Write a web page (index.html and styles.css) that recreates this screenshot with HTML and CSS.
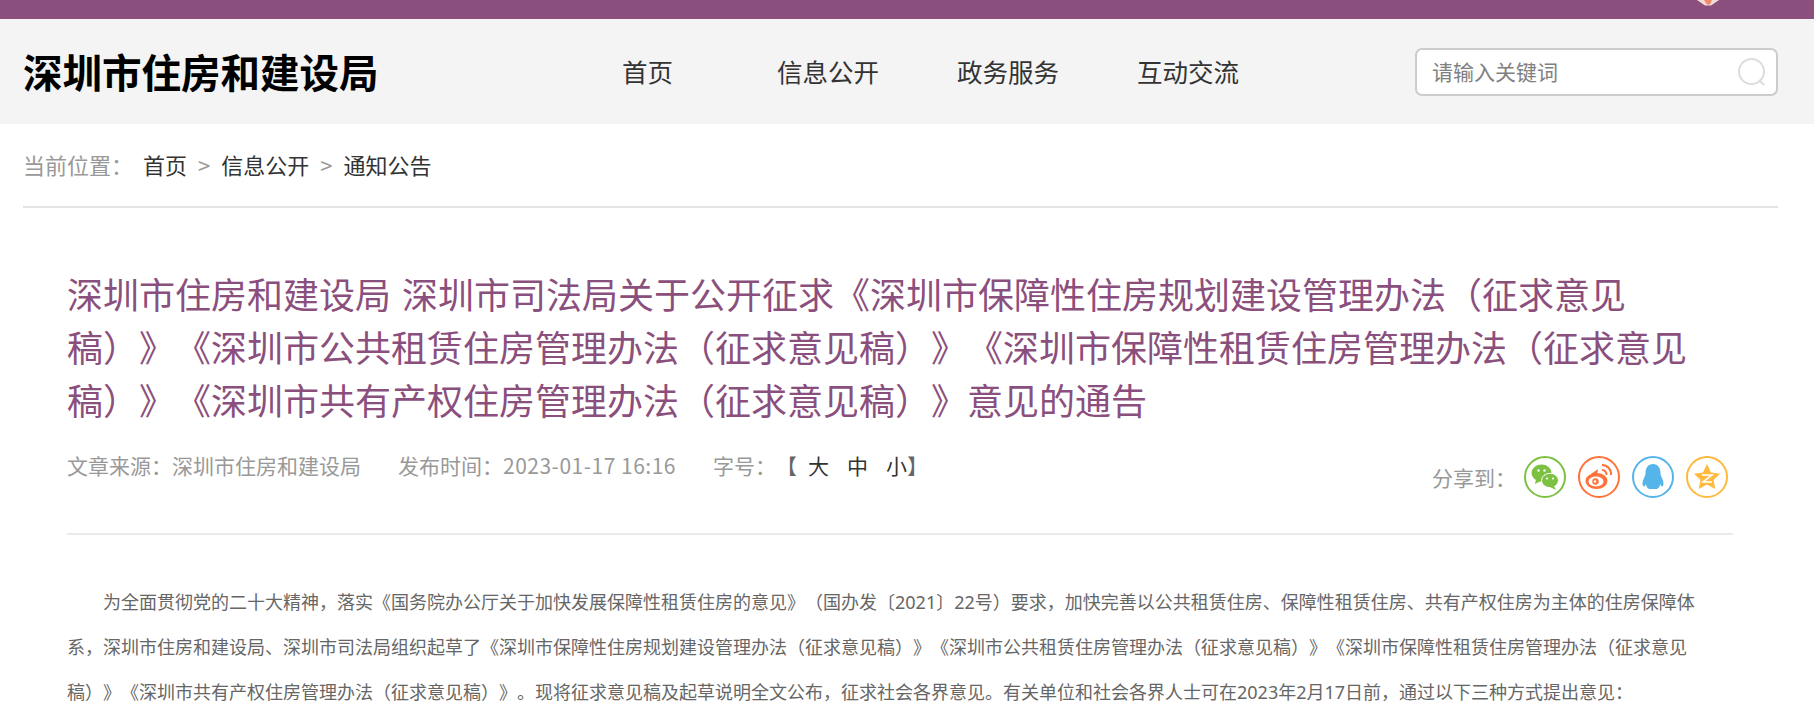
FILE: index.html
```html
<!DOCTYPE html>
<html>

<head>
    <meta charset="UTF-8">
    <title>深圳市住房和建设局</title>
    <link rel="stylesheet" href="styles.css">
</head>

<body>
    <div class="topbar">
        <svg class="ribbon" viewBox="0 0 24 6" width="24" height="6">
            <path d="M1 0h22l-8 5.500h-6z" fill="#f3dcd6" />
            <path d="M8 0h8l-2 4.500h-3z" fill="#f08a6c" />
        </svg>
    </div>
    <div class="header">
        <div class="logo">深圳市住房和建设局</div>
        <ul class="nav">
            <li class="nav-first">首页</li>
            <li>信息公开</li>
            <li>政务服务</li>
            <li>互动交流</li>
        </ul>
        <div class="search">
            <span class="search-text">请输入关键词</span>
            <svg class="search-icon" viewBox="0 0 28 28" width="28" height="28">
                <circle cx="13.5" cy="13.5" r="12.5" fill="none" stroke="#dcdcdc" stroke-width="2" />
                <path d="M21 22l5 5" stroke="#dcdcdc" stroke-width="2" />
            </svg>
        </div>
    </div>
    <div class="crumbs">
        <span class="crumbs-label">当前位置：</span>
        <span class="crumb">首页</span>
        <span class="crumbs-sep">&gt;</span>
        <span class="crumb">信息公开</span>
        <span class="crumbs-sep">&gt;</span>
        <span class="crumb">通知公告</span>
    </div>
    <div class="article">
        <h1 class="title">深圳市住房和建设局 深圳市司法局关于公开征求《深圳市保障性住房规划建设管理办法（征求意见稿）》《深圳市公共租赁住房管理办法（征求意见稿）》《深圳市保障性租赁住房管理办法（征求意见稿）》《深圳市共有产权住房管理办法（征求意见稿）》意见的通告</h1>
        <div class="meta">
            <div class="meta-left">
                <span>文章来源：深圳市住房和建设局</span>
                <span>发布时间：<span class="num">2023-01-17 16:16</span></span>
                <span class="size">字号：<b class="bracket bracket-open">【</b><i>大</i><i>中</i><i>小</i><b class="bracket">】</b></span>
            </div>
            <div class="share">
                <span class="share-label">分享到：</span>
                <div class="share-btns">
                    <span class="share-btn wechat">
                        <svg viewBox="0 0 28 28" width="28" height="28">
                            <ellipse cx="10.500" cy="10" rx="10" ry="8.500" fill="#7cc142" />
                            <path d="M5 16l-1 5 6-3z" fill="#7cc142" />
                            <ellipse cx="19" cy="17.500" rx="8.500" ry="7.200" fill="#7cc142" stroke="#fff" stroke-width="1" />
                            <path d="M23 23l2 4-6-3z" fill="#7cc142" />
                            <circle cx="7.500" cy="7.500" r="1.200" fill="#fff" />
                            <circle cx="13.500" cy="7.500" r="1.200" fill="#fff" />
                            <circle cx="16" cy="15.500" r="1.100" fill="#fff" />
                            <circle cx="22" cy="15.500" r="1.100" fill="#fff" />
                        </svg>
                    </span>
                    <span class="share-btn weibo">
                        <svg viewBox="0 0 28 28" width="28" height="28">
                            <ellipse cx="11.500" cy="18" rx="11" ry="8" fill="#ff7239" />
                            <path d="M6 11l7-5-1 6z" fill="#ff7239" />
                            <ellipse cx="11" cy="18.500" rx="7.500" ry="5" fill="#fff" />
                            <circle cx="10.500" cy="18.500" r="3.200" fill="#ff7239" />
                            <circle cx="10" cy="18.500" r="1.200" fill="#fff" />
                            <path d="M17 2a9 9 0 0 1 9 10M17 7a4.500 4.500 0 0 1 4.500 5" fill="none" stroke="#ff7239" stroke-width="2" />
                        </svg>
                    </span>
                    <span class="share-btn qq">
                        <svg viewBox="0 0 28 28" width="28" height="28">
                            <path d="M14 1c5 0 7.500 4 7.500 9 0 2 .5 3 1.500 5 1.500 3 2 6 1 8-1 1-2 0-3-2 0 2-1 4-3 5h-8c-2-1-3-3-3-5-1 2-2 3-3 2-1-2-.5-5 1-8 1-2 1.500-3 1.500-5 0-5 2.500-9 7.500-9z" fill="#55b5ea" />
                        </svg>
                    </span>
                    <span class="share-btn zone">
                        <svg viewBox="0 0 28 28" width="28" height="28">
                            <path d="M14 1l4 8.500 9 1.200-6.500 6.300 1.800 9-8.300-4.500-8.300 4.500 1.800-9L1 10.700l9-1.200z" fill="#ffb93c" />
                            <path d="M9 12h10l-9 7h9" fill="none" stroke="#fff" stroke-width="1.600" />
                        </svg>
                    </span>
                </div>
            </div>
        </div>
        <div class="content">
            <p>为全面贯彻党的二十大精神，落实《国务院办公厅关于加快发展保障性租赁住房的意见》（国办发〔2021〕22号）要求，加快完善以公共租赁住房、保障性租赁住房、共有产权住房为主体的住房保障体系，深圳市住房和建设局、深圳市司法局组织起草了《深圳市保障性住房规划建设管理办法（征求意见稿）》《深圳市公共租赁住房管理办法（征求意见稿）》《深圳市保障性租赁住房管理办法（征求意见稿）》《深圳市共有产权住房管理办法（征求意见稿）》。现将征求意见稿及起草说明全文公布，征求社会各界意见。有关单位和社会各界人士可在2023年2月17日前，通过以下三种方式提出意见：</p>
        </div>
    </div>
</body>

</html>
```
FILE: styles.css
```css
* {
    box-sizing: border-box;
}

body,
html {
    margin: 0;
    padding: 0;
    height: 724px;
    overflow: hidden;
    background-color: #fff;
    font-family: "Noto Sans CJK SC", sans-serif;
    font-kerning: none;
    text-spacing-trim: space-all;
    font-feature-settings: "chws" 0, "palt" 0, "kern" 0;
}

.topbar {
    height: 19px;
    background-color: #8b4f7d;
    display: flex;
    justify-content: flex-end;
    padding-right: 94px;
}

.ribbon {
    display: block;
}

.header {
    height: 105px;
    background-color: #f4f4f4;
    display: flex;
    align-items: center;
    padding: 0 36px 0 23px;
}

.logo {
    width: 599px;
    padding-bottom: 3px;
    font-size: 39.500px;
    font-weight: 700;
    color: #000;
}

.nav {
    display: flex;
    gap: 78px;
    list-style: none;
    margin: 0;
    padding: 0 0 2px;
    font-size: 25.500px;
    color: #333;
}

.nav-first {
    margin-right: 26px;
}

.search {
    margin-left: auto;
    width: 363px;
    height: 48px;
    border: 2px solid #ccc;
    border-radius: 7px;
    background-color: #fff;
    display: flex;
    align-items: center;
    justify-content: space-between;
    padding: 0 10px 0 15px;
    font-size: 21px;
    color: #808080;
}

.search-text {
    padding-bottom: 2px;
}

.search-icon {
    display: block;
}

.crumbs {
    margin: 0 36px 0 23px;
    height: 84px;
    padding-bottom: 2px;
    border-bottom: 2px solid #e3e3e3;
    display: flex;
    align-items: center;
    font-size: 22px;
    color: #333;
}

.crumbs-label {
    color: #999;
    margin-right: 10px;
}

.crumbs-sep {
    color: #999;
    margin: 0 11px;
}

.article {
    margin: 0 81px 0 67px;
}

.title {
    margin: 0;
    padding-top: 59px;
    font-size: 36px;
    font-weight: 400;
    line-height: 53px;
    word-spacing: 3px;
    color: #8b4f7d;
}

.meta {
    height: 109px;
    border-bottom: 2px solid #ebebeb;
    display: flex;
    justify-content: space-between;
    font-size: 21px;
    color: #999;
}

.meta-left {
    display: flex;
    gap: 37px;
    padding-top: 24px;
    line-height: 30px;
}

.num {
    letter-spacing: 0.5px;
}

.size i {
    font-style: normal;
    color: #333;
    margin-right: 18px;
}

.size i:last-of-type {
    margin-right: 0;
}

.bracket {
    font-weight: 400;
    color: #666;
}

.bracket-open {
    margin-right: 11px;
}

.share {
    display: flex;
    align-items: center;
    gap: 8px;
    height: 42px;
    margin-top: 30px;
    padding-right: 5px;
}

.share-btns {
    display: flex;
    gap: 12px;
}

.share-btn {
    width: 42px;
    height: 42px;
    border: 2px solid;
    border-radius: 50%;
    display: flex;
    align-items: center;
    justify-content: center;
}

.wechat {
    border-color: #7cc142;
}

.weibo {
    border-color: #ff7239;
}

.qq {
    border-color: #55b5ea;
}

.zone {
    border-color: #ffb93c;
}

.content {
    padding: 45px 12px 0 0;
    font-family: "Noto Sans", "Noto Sans CJK SC", sans-serif;
    font-size: 18px;
    line-height: 45px;
    color: #666;
}

.content p {
    margin: 0;
    text-indent: 36px;
}
```
